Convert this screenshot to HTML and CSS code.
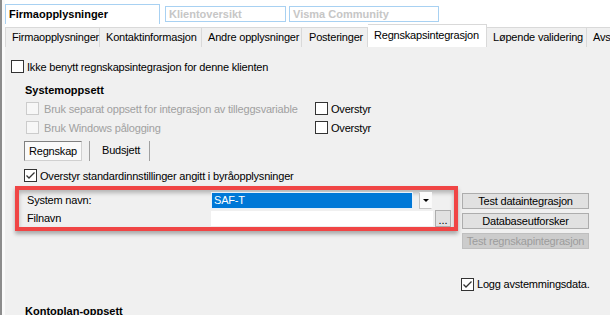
FILE: index.html
```html
<!DOCTYPE html>
<html lang="no">
  <head>
    <meta charset="UTF-8" />
    <title>Regnskapsintegrasjon</title>
    <link rel="stylesheet" href="styles.css">
  </head>
  <body>
    <div class="window">
      <div class="edge"></div>
      <div class="main">
        <div class="top-tabs">
          <div class="top-tab active">Firmaopplysninger</div>
          <div class="top-tab klient">Klientoversikt</div>
          <div class="top-tab visma">Visma Community</div>
        </div>

        <div class="sub-tabs">
          <div class="sub-tab t-firma">Firmaopplysninger</div>
          <div class="sub-tab t-kontakt">Kontaktinformasjon</div>
          <div class="sub-tab t-andre">Andre opplysninger</div>
          <div class="sub-tab t-post">Posteringer</div>
          <div class="sub-tab t-regn selected">Regnskapsintegrasjon</div>
          <div class="sub-tab t-lop">Løpende validering</div>
          <div class="sub-tab t-avs">Avstemming</div>
        </div>

        <div class="content">
          <div class="check top-check"><span class="box"></span>Ikke benytt regnskapsintegrasjon for denne klienten</div>

          <div class="section-title">Systemoppsett</div>

          <div class="option-row first">
            <div class="check disabled wide"><span class="box"></span>Bruk separat oppsett for integrasjon av tilleggsvariable</div>
            <div class="check"><span class="box"></span>Overstyr</div>
          </div>
          <div class="option-row">
            <div class="check disabled wide"><span class="box"></span>Bruk Windows pålogging</div>
            <div class="check"><span class="box"></span>Overstyr</div>
          </div>

          <div class="mode-tabs">
            <div class="mode-tab pressed">Regnskap</div>
            <div class="mode-tab">Budsjett</div>
          </div>

          <div class="check checked override"><span class="box"><svg width="11" height="11" viewBox="0 0 11 11"><path d="M1.5 5.5 L4 8 L9.5 2.5" fill="none" stroke="#333" stroke-width="1.3"/></svg></span>Overstyr standardinnstillinger angitt i byråopplysninger</div>

          <div class="integration">
            <div class="highlight">
              <div class="field-row">
                <span class="field-label">System navn:</span>
                <span class="combo">SAF-T</span>
                <span class="combo-arrow"></span>
              </div>
              <div class="field-row">
                <span class="field-label">Filnavn</span>
                <span class="text-input"></span>
                <span class="browse">...</span>
              </div>
            </div>

            <div class="actions">
              <button class="btn">Test dataintegrasjon</button>
              <button class="btn">Databaseutforsker</button>
              <button class="btn" disabled>Test regnskapintegrasjon</button>
              <div class="check checked log"><span class="box"><svg width="11" height="11" viewBox="0 0 11 11"><path d="M1.5 5.5 L4 8 L9.5 2.5" fill="none" stroke="#333" stroke-width="1.3"/></svg></span>Logg avstemmingsdata.</div>
            </div>
          </div>

          <div class="section-title kontoplan">Kontoplan-oppsett</div>
        </div>
      </div>
    </div>
  </body>
</html>
```

FILE: styles.css
```css
body {
  margin: 0;
  width: 610px;
  height: 315px;
  overflow: hidden;
  font-family: "Liberation Sans", Arial, sans-serif;
  font-size: 11px;
  letter-spacing: -0.2px;
  color: #000;
  background-color: #f0f0f0;
}

.window {
  display: flex;
  height: 315px;
}

.edge {
  width: 2px;
  flex-shrink: 0;
  background-color: #8c8c8c;
}

.main {
  flex: 1;
  min-width: 0;
  border-left: 3px solid #fafafa;
  background-color: #f0f0f0;
}

/* top level tabs */
.top-tabs {
  display: flex;
  align-items: flex-start;
  height: 24px;
  background-color: #fff;
  box-sizing: border-box;
  padding-top: 4px;
}

.top-tab {
  box-sizing: border-box;
  border: 1px solid #a8d1f2;
  font-weight: bold;
  letter-spacing: 0;
  color: #c6c6c6;
  padding-left: 3px;
  white-space: nowrap;
}

.top-tab.active {
  width: 155px;
  height: 20px;
  line-height: 18px;
  border-bottom: none;
  color: #000;
  background-color: #fff;
}

.top-tab.klient {
  width: 121px;
  height: 16px;
  line-height: 14px;
  margin: 2px 0 0 5px;
}

.top-tab.visma {
  width: 150px;
  height: 16px;
  line-height: 14px;
  margin: 2px 0 0 3px;
}

/* second level tabs */
.sub-tabs {
  display: flex;
  align-items: flex-end;
  height: 23px;
  background-color: #fff;
  overflow: hidden;
}

.sub-tab {
  box-sizing: border-box;
  flex-shrink: 0;
  height: 20px;
  line-height: 19px;
  padding-left: 6px;
  background-color: #f0f0f0;
  border: 1px solid #d9d9d9;
  border-bottom: none;
  border-left: none;
  white-space: nowrap;
}

.sub-tab:first-child {
  border-left: 1px solid #d9d9d9;
}

.t-firma { width: 95px; }
.t-kontakt { width: 102px; }
.t-andre { width: 100px; }
.t-post { width: 66px; padding-left: 7px; }
.t-regn { width: 119px; }
.t-lop { width: 100px; }
.t-avs { width: 100px; }

.sub-tab.selected {
  height: 23px;
  line-height: 21px;
  background-color: #fff;
}

/* content */
.content {
  padding-left: 6px;
  padding-top: 10px;
}

.check {
  display: flex;
  align-items: center;
  height: 19px;
  white-space: nowrap;
}

.box {
  box-sizing: border-box;
  flex-shrink: 0;
  width: 13px;
  height: 13px;
  margin-right: 3px;
  border: 1px solid #333;
  background-color: #fff;
  display: flex;
  align-items: center;
  justify-content: center;
}

.check.disabled {
  color: #a0a0a0;
}

.check.disabled .box {
  border-color: #cccccc;
  background-color: #f7f7f7;
  margin-right: 5px;
}

.section-title {
  font-weight: bold;
  letter-spacing: 0;
  margin-left: 14px;
  margin-top: 7px;
  height: 14px;
  line-height: 14px;
}

.option-row {
  display: flex;
  margin-left: 15px;
}

.option-row.first {
  margin-top: 2px;
}

.option-row .wide {
  width: 289px;
}

.mode-tabs {
  display: flex;
  margin: 4px 0 0 13px;
  height: 20px;
}

.mode-tab {
  box-sizing: border-box;
  height: 20px;
  line-height: 19px;
  padding: 0 9px 0 12px;
  border-right: 1px solid #a0a0a0;
}

.mode-tab.pressed {
  width: 58px;
  padding: 0;
  text-align: center;
  background-color: #fafafa;
  border: 1px solid #d0d0d0;
  border-top-color: #808080;
  border-left-color: #808080;
  margin-right: 7px;
}

.mode-tab.pressed + .mode-tab {
  border-left: 1px solid #a0a0a0;
}

.check.override {
  margin: 6px 0 0 13px;
  height: 17px;
}

/* integration block */
.integration {
  display: flex;
  align-items: flex-start;
  margin-top: 2px;
}

.highlight {
  box-sizing: border-box;
  width: 443px;
  height: 45px;
  margin-left: 4px;
  border: 4px solid #f04545;
  box-shadow: 0 3px 4px rgba(0, 0, 0, 0.3), inset 0 3px 4px rgba(0, 0, 0, 0.25);
  padding-left: 8px;
}

.field-row {
  display: flex;
  align-items: center;
  height: 18px;
}

.field-row:first-child {
  margin-top: 1px;
}

.field-label {
  width: 184px;
}

.combo {
  box-sizing: border-box;
  width: 202px;
  height: 17px;
  line-height: 15px;
  padding-left: 2px;
  background-color: #0078d7;
  border: 1px solid #e6f0fa;
  color: #fff;
}

.combo-arrow {
  box-sizing: border-box;
  position: relative;
  width: 13px;
  height: 17px;
  margin-left: 6px;
  border: 1px solid #c4c4c4;
  border-top-color: #fafafa;
  border-right-color: #fafafa;
  background-color: #fbfbfb;
}

.combo-arrow::after {
  content: "";
  position: absolute;
  left: 3px;
  top: 6px;
  border-left: 3px solid transparent;
  border-right: 3px solid transparent;
  border-top: 3px solid #000;
}

.text-input {
  width: 222px;
  height: 15px;
  background-color: #fff;
}

.browse {
  box-sizing: border-box;
  width: 16px;
  height: 17px;
  margin-left: 2px;
  background-color: #e1e1e1;
  border: 1px solid #adadad;
  line-height: 19px;
  text-align: center;
  letter-spacing: 0;
}

.actions {
  display: flex;
  flex-direction: column;
  gap: 4px;
  margin-left: 4px;
  padding-top: 7px;
}

.btn {
  box-sizing: border-box;
  width: 127px;
  height: 16px;
  padding: 0;
  font-family: inherit;
  font-size: 11px;
  letter-spacing: -0.2px;
  line-height: 14px;
  white-space: nowrap;
  color: #000;
  background-color: #e1e1e1;
  border: 1px solid #adadad;
}

.btn:disabled {
  color: #9c9c9c;
  background-color: #cccccc;
  border-color: #bfbfbf;
}

.check.log {
  margin-top: 23px;
  margin-left: -1px;
  height: 16px;
}

.section-title.kontoplan {
  margin-top: 12px;
}
```
